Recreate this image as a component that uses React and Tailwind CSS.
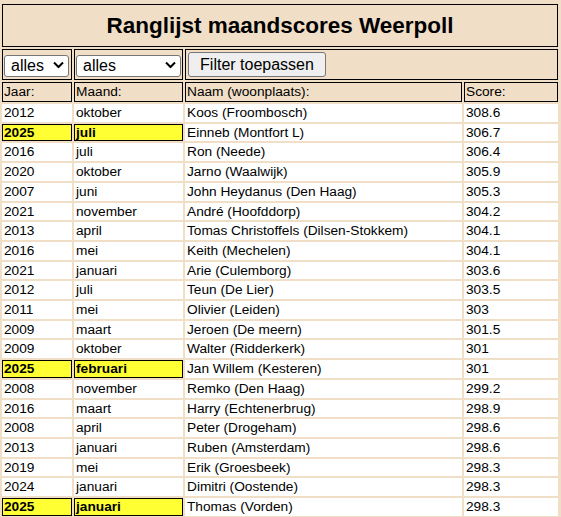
import React from "react";

const rows = [
  ["2012", "oktober", "Koos (Froombosch)", "308.6"],
  ["2025", "juli", "Einneb (Montfort L)", "306.7", true],
  ["2016", "juli", "Ron (Neede)", "306.4"],
  ["2020", "oktober", "Jarno (Waalwijk)", "305.9"],
  ["2007", "juni", "John Heydanus (Den Haag)", "305.3"],
  ["2021", "november", "André (Hoofddorp)", "304.2"],
  ["2013", "april", "Tomas Christoffels (Dilsen-Stokkem)", "304.1"],
  ["2016", "mei", "Keith (Mechelen)", "304.1"],
  ["2021", "januari", "Arie (Culemborg)", "303.6"],
  ["2012", "juli", "Teun (De Lier)", "303.5"],
  ["2011", "mei", "Olivier (Leiden)", "303"],
  ["2009", "maart", "Jeroen (De meern)", "301.5"],
  ["2009", "oktober", "Walter (Ridderkerk)", "301"],
  ["2025", "februari", "Jan Willem (Kesteren)", "301", true],
  ["2008", "november", "Remko (Den Haag)", "299.2"],
  ["2016", "maart", "Harry (Echtenerbrug)", "298.9"],
  ["2008", "april", "Peter (Drogeham)", "298.6"],
  ["2013", "januari", "Ruben (Amsterdam)", "298.6"],
  ["2019", "mei", "Erik (Groesbeek)", "298.3"],
  ["2024", "januari", "Dimitri (Oostende)", "298.3"],
  ["2025", "januari", "Thomas (Vorden)", "298.3", true],
];

function Chevron() {
  return (
    <svg width="11" height="7" viewBox="0 0 11 7" className="pointer-events-none absolute right-[5px] top-1/2 -translate-y-1/2">
      <path d="M1 1 L5.5 5.5 L10 1" fill="none" stroke="#000" strokeWidth="2" />
    </svg>
  );
}

function Select({ w }) {
  return (
    <div className={`relative ${w} h-[22px]`}>
      <select className="appearance-none w-full h-full bg-white border border-[#767676] rounded-[3px] pl-[6px] text-[16px] leading-[18px] text-black">
        <option>alles</option>
      </select>
      <Chevron />
    </div>
  );
}

export default function App() {
  return (
    <div
      className="w-full min-h-[517px] bg-[#f1dec6] text-black"
      style={{ fontFamily: '"Liberation Sans", Arial, sans-serif' }}
    >
      <div className="grid grid-cols-[70px_109px_277px_94px] gap-[2px] px-[2px] pt-[4px] w-[560px]">
        <div className="col-span-4 h-[43px] border border-black flex items-center justify-center text-[22.5px] font-bold">
          Ranglijst maandscores Weerpoll
        </div>

        <div className="h-[31px] border border-black flex items-center pl-[1px]">
          <Select w="w-[65px]" />
        </div>
        <div className="h-[31px] border border-black flex items-center pl-[1px]">
          <Select w="w-[105px]" />
        </div>
        <div className="col-span-2 h-[31px] border border-black flex items-center pl-[2px]">
          <button className="h-[25px] w-[138px] bg-[#efefef] border border-[#767676] rounded-[3px] text-[16px] leading-[18px] text-black">
            Filter toepassen
          </button>
        </div>

        {["Jaar:", "Maand:", "Naam (woonplaats):", "Score:"].map((h) => (
          <div key={h} className="h-[20px] border border-black pl-[1px] text-[13.7px] leading-[18px]">
            {h}
          </div>
        ))}

        {rows.map((r, i) => (
          <React.Fragment key={i}>
            {r.slice(0, 4).map((c, j) => {
              const hl = r[4] && j < 2;
              return (
                <div
                  key={j}
                  className={`border pl-[1px] text-[13.7px] leading-[15.7px] whitespace-nowrap ${
                    hl ? "bg-[#ffff33] border-black font-bold" : "bg-white border-white"
                  }`}
                >
                  {c}
                </div>
              );
            })}
          </React.Fragment>
        ))}
      </div>
    </div>
  );
}
